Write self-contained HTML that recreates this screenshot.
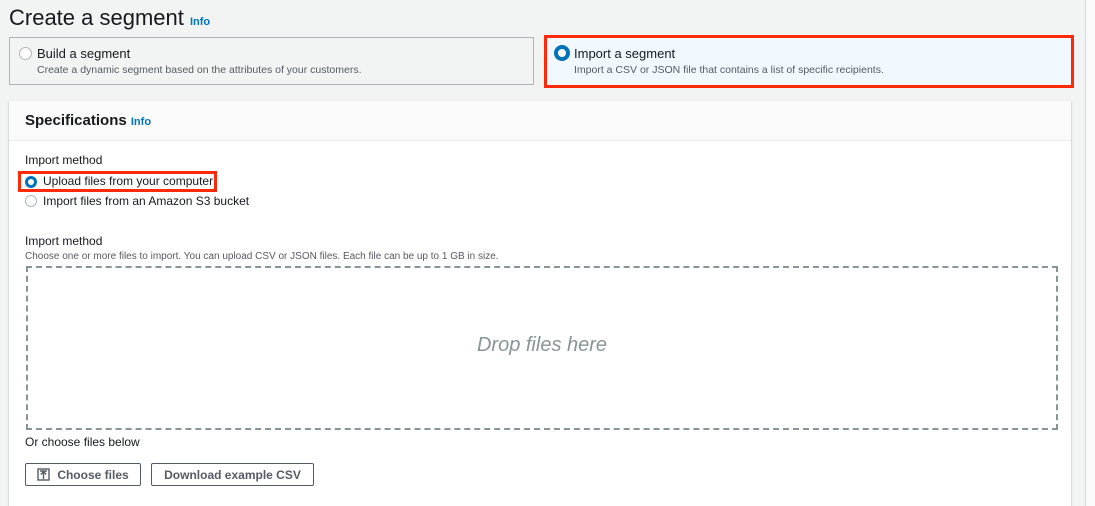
<!DOCTYPE html>
<html><head><style>
*{box-sizing:border-box;margin:0;padding:0}
html,body{width:1095px;height:506px;overflow:hidden}
body{background:#f2f3f3;font-family:"Liberation Sans",sans-serif;color:#16191f;position:relative}
.abs{position:absolute}
.info{color:#0073bb;font-weight:bold;font-size:11px}
.card{position:absolute;border:1px solid #aab7b8;background:#f2f3f3}
.radio{position:absolute;width:13px;height:13px;border-radius:50%;border:1.5px solid #aab7b8;background:#fff}
.radio.on{border:3.5px solid #0073bb}
.t{position:absolute;font-size:13px;white-space:nowrap}
.s{position:absolute;font-size:10.5px;color:#545b64;white-space:nowrap}
.btn{position:absolute;border:1px solid #545b64;background:#fff;font-weight:bold;font-size:12px;color:#545b64;display:flex;align-items:center;justify-content:center;border-radius:2px}
.red{position:absolute;border:3px solid #ff2a0a}
</style></head><body>
<div class="abs" style="left:1085px;top:0;width:1px;height:506px;background:#d5dbdb"></div>
<div class="abs" style="left:1086px;top:0;width:9px;height:506px;background:#fafafa"></div>
<div class="t" style="left:9px;top:5px;font-size:22px">Create a segment <span class="info">Info</span></div>

<div class="card" style="left:9px;top:37px;width:525px;height:48px"></div>
<div class="radio" style="left:19px;top:47px"></div>
<div class="t" style="left:37px;top:46px">Build a segment</div>
<div class="s" style="left:37px;top:64px">Create a dynamic segment based on the attributes of your customers.</div>

<div class="red" style="left:544px;top:35px;width:530px;height:53px"></div>
<div class="abs" style="left:547px;top:38px;width:524px;height:47px;background:#f1f9ff"></div>
<div class="radio on" style="left:554px;top:45px;width:16px;height:16px;border-width:4px"></div>
<div class="t" style="left:574px;top:46px">Import a segment</div>
<div class="s" style="left:574px;top:64px">Import a CSV or JSON file that contains a list of specific recipients.</div>

<div class="abs" style="left:9px;top:101px;width:1062px;height:420px;background:#fff;box-shadow:0 1px 2px rgba(0,28,36,.3)"></div>
<div class="abs" style="left:9px;top:101px;width:1062px;height:40px;background:#fafafa;border-bottom:1px solid #eaeded"></div>
<div class="t" style="left:25px;top:112px;font-size:15px;font-weight:bold">Specifications <span class="info">Info</span></div>

<div class="t" style="left:25px;top:153px;font-size:12px">Import method</div>
<div class="red" style="left:18px;top:171px;width:199px;height:21px"></div>
<div class="radio on" style="left:25px;top:176px;width:12px;height:12px"></div>
<div class="t" style="left:43px;top:174px;font-size:12px">Upload files from your computer</div>
<div class="radio" style="left:25px;top:195px;width:12px;height:12px"></div>
<div class="t" style="left:43px;top:194px;font-size:12px">Import files from an Amazon S3 bucket</div>

<div class="t" style="left:25px;top:234px;font-size:12px">Import method</div>
<div class="s" style="left:25px;top:251px;font-size:10px">Choose one or more files to import. You can upload CSV or JSON files. Each file can be up to 1 GB in size.</div>
<div class="abs" style="left:26px;top:266px;width:1032px;height:164px;border:2px dashed #879596"></div>
<div class="t" style="left:0;top:334px;width:1084px;text-align:center;font-size:20px;font-style:italic;color:#879596">Drop files here</div>

<div class="t" style="left:25px;top:435px;font-size:12px">Or choose files below</div>
<div class="btn" style="left:25px;top:463px;width:116px;height:23px">
<svg width="13" height="13" viewBox="0 0 13 13" style="margin-right:7px"><rect x="1" y="1" width="11" height="11" fill="none" stroke="#545b64" stroke-width="1.4"/><path d="M6.5 11V4M3.8 6.5L6.5 3.8 9.2 6.5M3 3h7" fill="none" stroke="#545b64" stroke-width="1.4"/></svg>Choose files</div>
<div class="btn" style="left:151px;top:463px;width:163px;height:23px">Download example CSV</div>
</body></html>
